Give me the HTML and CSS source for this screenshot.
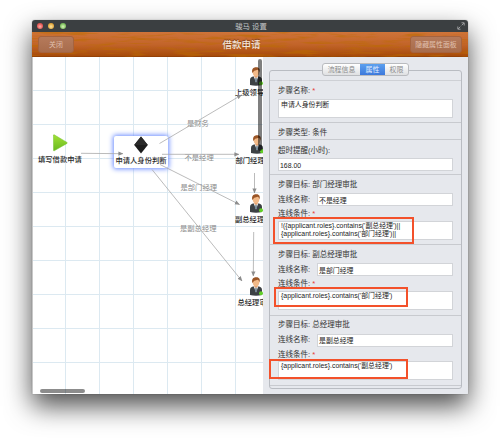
FILE: index.html
```html
<!DOCTYPE html>
<html lang="zh-CN">
<head>
<meta charset="utf-8">
<title>骏马 设置</title>
<link rel="stylesheet" href="styles.css">
</head>
<body>
<div class="window">
  <header class="titlebar">
    <div class="lights"><i class="red"></i><i class="yellow"></i><i class="green"></i></div>
    <span>骏马 设置</span>
    <svg class="expand" viewBox="0 0 8 8"><path d="M4.7 3.3 7 1M4.5.8h2.7v2.7M3.3 4.7 1 7M.8 4.5v2.7h2.7"/></svg>
  </header>
  <div class="toolbar">
    <svg class="wood" viewBox="0 0 436 26" preserveAspectRatio="none">
      <defs>
        <filter id="grain" x="0" y="0" width="100%" height="100%">
          <feTurbulence type="fractalNoise" baseFrequency=".035 .3" numOctaves="3" seed="8"/>
          <feColorMatrix values="0 0 0 0 .5  0 0 0 0 .15  0 0 0 0 0  4 0 0 0 -1.9"/>
        </filter>
      </defs>
      <rect width="436" height="26" filter="url(#grain)"/>
    </svg>
    <button class="close">关闭</button>
    <h1>借款申请</h1>
    <button class="hide">隐藏属性面板</button>
  </div>
  <main>
    <section class="canvas">
      <span class="link-label l1">是财务</span>
      <span class="link-label l2">不是经理</span>
      <span class="link-label l3">是部门经理</span>
      <span class="link-label l4">是副总经理</span>
      <div class="node start">
        <svg viewBox="0 0 16 18"><defs><linearGradient id="play" x2="0" y2="1"><stop stop-color="#a2e136"/><stop offset="1" stop-color="#68b91f"/></linearGradient></defs><path d="M1.500 1.200Q1.500.5 2.200.8L15 8.400Q15.600 8.900 15 9.400L2.200 16.800Q1.500 17 1.500 16.300z" fill="url(#play)" stroke="#73c32a" stroke-width=".5"/></svg>
        <span>填写借款申请</span>
      </div>
      <div class="node selected">
        <svg viewBox="0 0 16 18"><path d="M8 .4 14.800 9 8 17.600 1.200 9z" fill="#1c1c1c"/><path d="M8 .4 14.800 9H1.200z" fill="#292929"/></svg>
        <span>申请人身份判断</span>
      </div>
      <svg width="0" height="0" class="defs">
        <symbol id="person" viewBox="0 0 14 19">
          <path d="M1 18V13Q1 10 5 9.300H9Q13 10 13 13V18Q7 19.500 1 18z" fill="#3d4144"/>
          <path d="M4.600 9 7 15.500 9.400 9z" fill="#f4f4f2"/>
          <path d="M6.400 10.500h1.200l.5 3.500L7 15.500 5.900 14z" fill="#748695"/>
          <path d="M5.200 7h3.600v2.500L7 11 5.200 9.500z" fill="#e5a06c"/>
          <ellipse cx="7" cy="5.200" rx="3.300" ry="4" fill="#f2ba89"/>
          <path d="M3.400 6C2.300 2.300 4.300.2 7.200.3 10.500.2 11.500 2.800 10.400 5.500 10.200 3.800 9.500 3 8.400 2.700 6.700 3.600 5.300 3 4.800 4.200z" fill="#9b5526"/>
          <circle cx="12" cy="16.200" r="2" fill="#62cf28"/>
        </symbol>
      </svg>
      <div class="node person p1"><svg><use href="#person"/></svg><span>上级领导</span></div>
      <div class="node person p2"><svg><use href="#person"/></svg><span>部门经理</span></div>
      <div class="node person p3"><svg><use href="#person"/></svg><span>副总经理</span></div>
      <div class="node person p4"><svg><use href="#person"/></svg><span>总经理审批</span></div>
      <svg class="edges" viewBox="32 57 231 337">
        <defs>
          <marker id="arrow" viewBox="0 0 5 5" refX="4.6" refY="2.5" markerWidth="5" markerHeight="5" markerUnits="userSpaceOnUse" orient="auto"><path d="M0 .4 5 2.5 0 4.6z" fill="#8d8d8d"/></marker>
        </defs>
        <g class="links">
          <path d="M81 153.300 123 153.700"/>
          <path d="M159.500 143.500 241.500 95"/>
          <path d="M162 154.300H239"/>
          <path d="M160 164.500 239.500 204.500"/>
          <path d="M152 169.500 242 281"/>
          <path d="M254.500 173V193"/>
          <path d="M253.700 232 253.300 276"/>
        </g>
      </svg>
      <i class="scroll-v"></i>
      <i class="scroll-h"></i>
    </section>
    <aside class="panel">
      <nav class="tabs"><a>流程信息</a><a class="active">属性</a><a>权限</a></nav>
      <form>
        <div class="head"></div>
        <section class="name"><label>步骤名称: <b>*</b></label><div class="area">申请人身份判断</div></section>
        <section class="type"><label>步骤类型: 条件</label></section>
        <section class="timeout"><label>超时提醒(小时):</label><div class="input">168.00</div></section>
        <section class="target">
          <label>步骤目标: 部门经理审批</label>
          <div class="row"><label>连线名称:</label><div class="input">不是经理</div></div>
          <label class="cond">连线条件: <b>*</b></label>
          <div class="area">!({applicant.roles}.contains('副总经理')||<br>{applicant.roles}.contains('部门经理')||</div>
          <i class="mark m1"></i>
        </section>
        <section class="target">
          <label>步骤目标: 副总经理审批</label>
          <div class="row"><label>连线名称:</label><div class="input">是部门经理</div></div>
          <label class="cond">连线条件: <b>*</b></label>
          <div class="area">{applicant.roles}.contains('部门经理')</div>
          <i class="mark m2"></i>
        </section>
        <section class="target">
          <label>步骤目标: 总经理审批</label>
          <div class="row"><label>连线名称:</label><div class="input">是副总经理</div></div>
          <label class="cond">连线条件: <b>*</b></label>
          <div class="area">{applicant.roles}.contains('副总经理')</div>
          <i class="mark m3"></i>
        </section>
      </form>
    </aside>
  </main>
</div>
</body>
</html>
```
FILE: styles.css
```css
* { box-sizing: border-box; }
body { margin: 0; height: 439px; overflow: hidden; background: #fff; font: 7.5px/10px "Liberation Sans", "Noto Sans CJK SC", sans-serif; color: #333; }
.window { width: 436px; height: 374px; margin: 20px 0 0 32px; border-radius: 3px 3px 1px 1px; box-shadow: 0 12px 27px rgba(0,0,0,.7), 0 0 1px rgba(0,0,0,.5); display: flex; flex-direction: column; }
.titlebar { height: 12px; background: #3b3f41; border-radius: 3px 3px 0 0; display: grid; grid-template-columns: 1fr auto 1fr; align-items: center; color: #c5c7c8; font-size: 7.4px; padding: 0 3px 0 5px; }
.titlebar span { padding-top: 1px; }
.lights { display: flex; gap: 5.4px; }
.lights i { width: 6px; height: 6px; border-radius: 50%; }
.red { background: radial-gradient(circle at 50% 60%, #ffb0a8, #e4524f 65%); }
.yellow { background: radial-gradient(circle at 50% 60%, #ffe6a0, #e0a43a 65%); }
.green { background: radial-gradient(circle at 50% 60%, #d8f5b8, #7abc5a 65%); }
.expand { width: 8px; height: 8px; justify-self: end; fill: none; stroke: #9a9c9d; stroke-width: 1; }
.toolbar { position: relative; height: 25px; background: linear-gradient(#cf7439, #c2642a 50%, #a84c0b 94%, #8b3b05); display: grid; grid-template-columns: 1fr auto 1fr; align-items: center; padding: 0 6px; }
.wood { position: absolute; inset: 0; width: 100%; height: 100%; opacity: .55; }
.toolbar button, .toolbar h1 { position: relative; }
.toolbar h1 { margin: 1px 17px 0 0; font-size: 9.5px; line-height: 14px; font-weight: 500; color: #f3e3d8; text-shadow: 0 -1px 1px #7c3b16; }
.toolbar button { height: 17px; padding: 0; border: 1px solid #a5633f; border-radius: 3px; background: linear-gradient(#b57a5b, #a86c4c); color: #e0c0ae; font: inherit; font-size: 6.9px; }
.toolbar .close { width: 36px; }
.toolbar .hide { width: 52px; justify-self: end; }
main { height: 337px; display: flex; }
.canvas { position: relative; width: 231px; overflow: hidden; background: repeating-linear-gradient(90deg, transparent 0 33px, #dce9f1 33px 34px), repeating-linear-gradient(transparent 0 33px, #dce9f1 33px 34px) #fff; box-shadow: inset 1px 0 #c8c8c8; }
.edges { position: absolute; inset: 0; width: 231px; height: 337px; }
.links path { fill: none; stroke: #a9a9a9; stroke-width: .8; marker-end: url(#arrow); }
.link-label { position: absolute; font-size: 7.3px; color: #8c8c8c; white-space: nowrap; }
.l1 { left: 155px; top: 62px; }
.l2 { left: 152.500px; top: 96px; }
.l3 { left: 148.500px; top: 126px; }
.l4 { left: 148px; top: 167px; }
.node { position: absolute; display: flex; flex-direction: column; align-items: center; font-size: 7.3px; font-weight: 500; line-height: 10px; color: #2b2b2b; white-space: nowrap; }
.node svg { width: 16px; height: 18px; flex: none; }
.start { left: 6px; top: 77px; }
.start span { margin-top: 3px; }
.selected { left: 82px; top: 79px; width: 54px; height: 32px; background: #fff; border-radius: 2px; box-shadow: 0 0 5px 1px #6b8cff; }
.selected span { margin-top: 2px; }
.person { align-items: flex-start; }
.person svg { width: 14px; height: 19px; margin-left: 14px; }
.person span { margin-top: 2px; }
.p1 { left: 203px; top: 10px; }
.p2 { left: 203.500px; top: 78px; }
.p3 { left: 203px; top: 137px; }
.p4 { left: 205.500px; top: 220px; }
.p4 svg { margin-left: 11px; }
.defs { position: absolute; }
.scroll-v { position: absolute; left: 225.500px; top: 2px; width: 4px; height: 92px; border-radius: 2px; background: rgba(0,0,0,.5); }
.scroll-h { position: absolute; left: 8px; top: 332px; width: 45px; height: 4px; border-radius: 2px; background: rgba(0,0,0,.45); }
.panel { width: 205px; background: #e6e8ed; padding: 6px; border-radius: 0 0 1px; }
.tabs { position: relative; display: flex; width: 87px; height: 13px; margin-left: 53px; border: 1px solid #b9bbbf; border-radius: 3px; background: linear-gradient(#fff, #dfe0e2); overflow: hidden; line-height: 11px; color: #8b8b8b; font-size: 6.9px; text-align: center; }
.tabs a { flex: 0 0 37px; }
.tabs .active { flex-basis: 25px; background: linear-gradient(#5ca0ef, #3c78db); color: #e2efff; }
.tabs a:last-child { flex: 1; }
form { width: 193px; height: 319px; margin-top: -6px; border: 1px solid #b9bcc2; border-radius: 3px; }
.head { height: 10px; border-bottom: 1px solid #ced0d5; }
form section { position: relative; border-bottom: 1px solid #c8cacf; padding: 0 8px; }
label { display: block; line-height: 10px; white-space: nowrap; }
label b { color: #e53935; font-weight: 400; }
.input, .area { background: #fff; border: 1px solid #d2d4d8; color: #222; font-size: 6.9px; overflow: hidden; white-space: nowrap; }
.input { height: 13px; padding: 1.500px 1px 0; line-height: 10px; }
.area { height: 19px; padding: 0 2px; line-height: 8.500px; }
.name { height: 42px; padding-top: 4.500px !important; }
.name .area { margin-top: 3.500px; line-height: 10px; }
.type { height: 17px; padding-top: 5px !important; }
.timeout { height: 35px; padding-top: 5.500px !important; }
.timeout .input { margin-top: 2.500px; }
.target { height: 70.400px; padding-top: 4.500px !important; }
.row { display: flex; margin-top: 3.500px; height: 13px; align-items: center; }
.row label { width: 39px; flex: none; }
.row .input { flex: 1; }
.cond { margin-top: 3px; }
.target .area { margin-top: 1.500px; }
.mark { position: absolute; border: 2px solid #f3512b; }
.m1 { left: 3px; top: 42px; width: 141px; height: 27px; }
.m2 { left: 4px; top: 42px; width: 134px; height: 20px; }
.m3 { left: -1px; top: 43.500px; width: 139px; height: 20px; }
```
